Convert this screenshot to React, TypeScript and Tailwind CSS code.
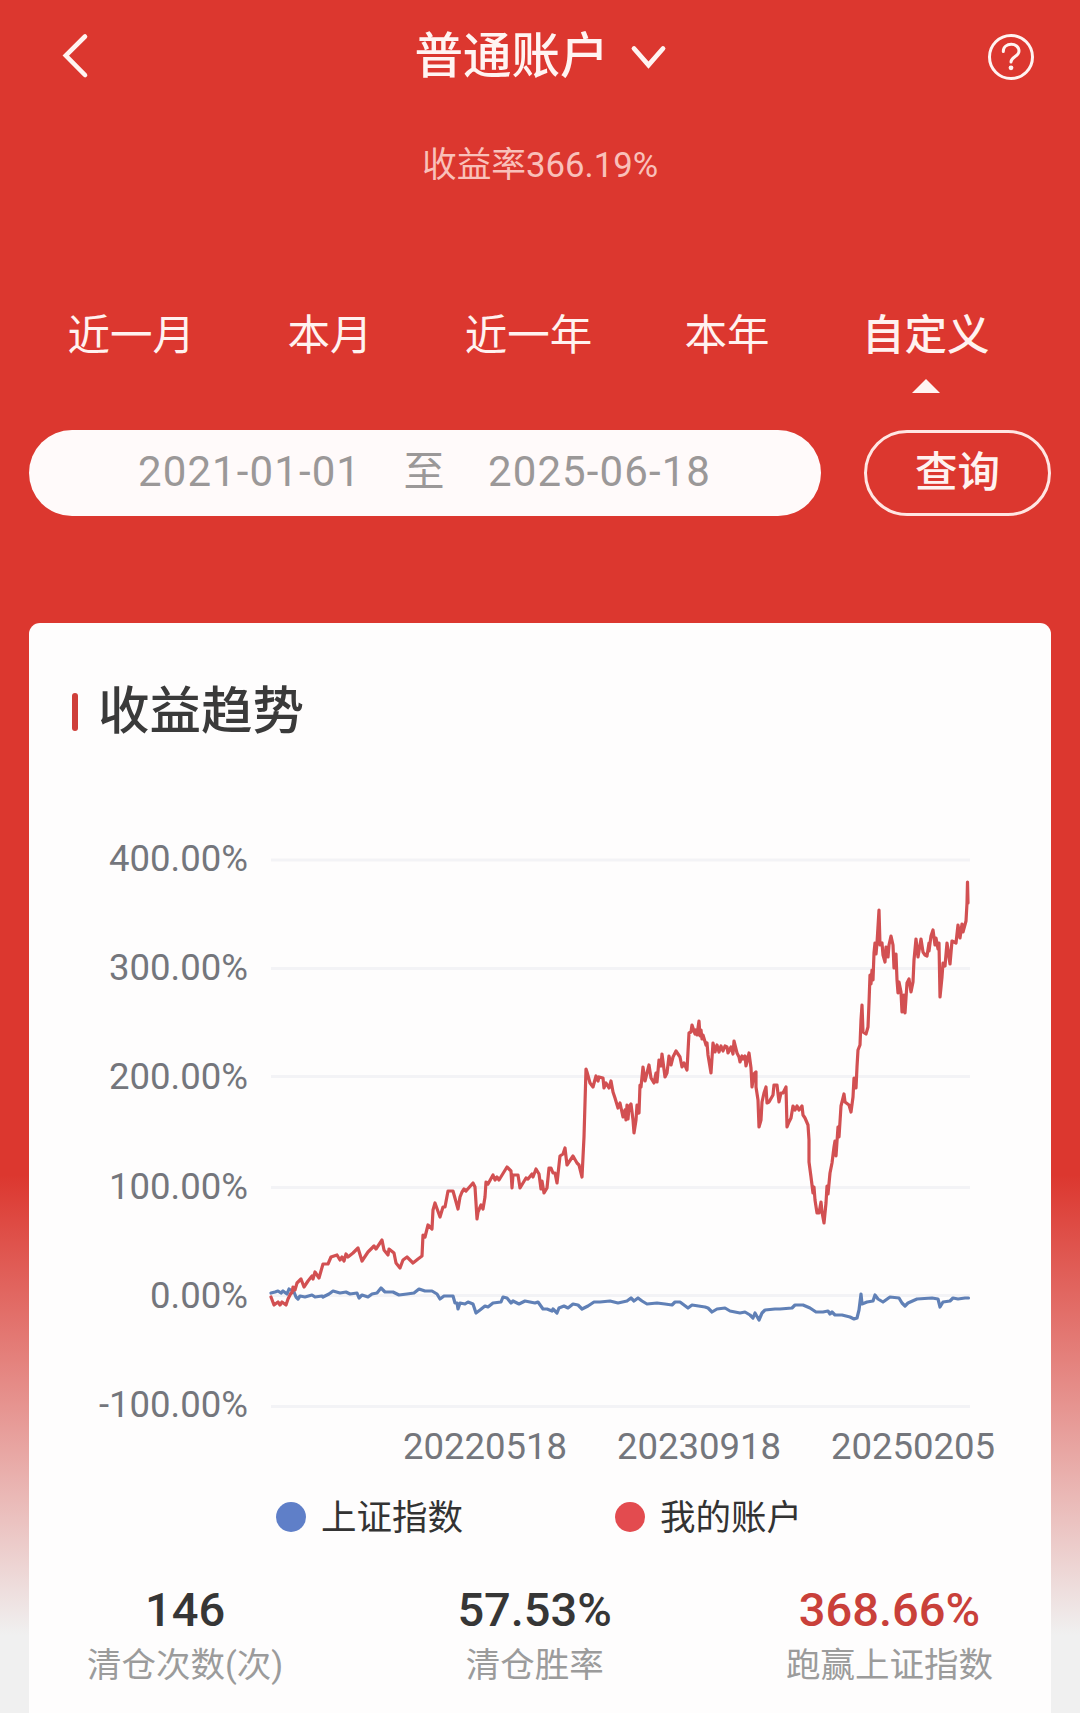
const PERIODS = ['近一月', '本月', '近一年', '本年', '自定义'];
const Y_LABELS = ['400.00%', '300.00%', '200.00%', '100.00%', '0.00%', '-100.00%'];
const X_LABELS = ['20220518', '20230918', '20250205'];
const GRID_LINES = [860, 968.5, 1076.5, 1187.5, 1295.5, 1406.5];

const ACCOUNT =
  '271,1297 274,1305 278,1302 280,1305 282,1302 286,1305 288,1299 291,1293 292,1293 293,1287 295,1290 297,1283 301,1279 304,1287 308,1281 312,1276 313,1279 315,1272 319,1278 323,1264 328,1264 331,1257 337,1255 340,1260 342,1257 344,1261 346,1254 348,1257 353,1253 358,1248 362,1261 368,1252 374,1246 376,1249 382,1240 384,1250 388,1255 389,1249 394,1253 396,1263 400,1268 403,1260 407,1257 413,1263 418,1259 422,1256 423,1235 425,1237 428,1225 432,1229 433,1210 435,1203 440,1217 443,1207 445,1207 448,1191 453,1191 458,1209 460,1197 462,1192 464,1189 466,1191 473,1183 475,1187 477,1219 ' +
  '478,1212 481,1205 483,1209 485,1197 486,1182 488,1184 493,1175 495,1180 497,1177 499,1180 507,1167 511,1171 512,1188 513,1175 518,1175 520,1188 526,1178 528,1179 532,1174 533,1177 536,1169 539,1174 541,1189 542,1181 544,1193 547,1188 549,1168 551,1168 553,1173 555,1173 557,1183 560,1156 563,1154 565,1148 567,1165 573,1156 577,1163 579,1165 582,1177 584,1137 586,1069 587,1072 590,1083 593,1087 596,1076 598,1081 599,1077 603,1078 604,1088 606,1083 609,1088 611,1081 613,1092 615,1098 618,1108 620,1103 623,1117 625,1110 626,1120 627,1105 628,1119 629,1107 631,1104 633,1120 634,1133 636,1120 637,1105 639,1113 640,1085 641,1087 643,1067 645,1081 649,1065 651,1078 654,1083 656,1073 657,1082 659,1060 661,1066 662,1054 665,1077 667,1073 669,1056 671,1065 673,1057 676,1051 680,1057 682,1067 684,1063 687,1070 ' +
  '689,1033 691,1032 692,1025 695,1034 696,1030 697,1035 699,1021 700,1036 701,1030 702,1039 703,1035 706,1045 707,1043 708,1055 711,1073 713,1043 715,1052 717,1045 719,1052 721,1046 723,1051 725,1046 727,1047 728,1053 731,1047 733,1054 734,1041 737,1053 739,1057 740,1062 742,1056 743,1059 745,1056 746,1066 749,1053 751,1068 752,1087 754,1074 756,1072 756,1087 758,1100 759,1127 761,1120 762,1102 764,1093 766,1087 767,1103 769,1102 773,1095 774,1085 777,1085 779,1102 781,1093 783,1093 786,1087 787,1127 789,1122 791,1118 793,1106 795,1110 797,1106 799,1110 802,1106 803,1115 805,1118 808,1125 809,1140 809,1162 811,1177 813,1193 814,1187 815,1200 817,1213 819,1213 821,1202 822,1212 824,1223 826,1203 827,1186 828,1194 830,1173 832,1163 834,1147 835,1141 836,1156 838,1127 839,1137 841,1106 ' +
  '844,1094 845,1102 849,1105 851,1112 853,1097 854,1078 856,1088 857,1067 858,1050 860,1045 861,1020 862,1005 863,1032 866,1034 868,1027 869,1003 870,975 871,984 872,970 873,980 874,953 875,943 876,954 877,943 879,910 880,945 882,943 883,955 885,962 886,947 888,957 889,945 891,936 893,945 894,968 896,954 897,980 898,993 899,982 901,992 902,1012 904,995 905,1013 907,983 909,979 911,992 913,982 914,960 916,939 918,957 921,939 923,952 925,955 927,956 929,943 929,951 931,936 933,930 935,945 936,938 938,949 939,943 940,997 942,977 943,963 945,966 947,943 950,964 952,941 956,943 958,925 960,938 962,924 963,932 966,921 967,903 967.5,882 968,903';

const INDEX =
  '271,1293 275,1292 278,1291 281,1293 283,1291 287,1294 289,1289 294,1292 296,1297 298,1299 300,1296 305,1297 312,1295 315,1297 322,1296 323,1297 329,1294 333,1291 340,1293 346,1292 350,1294 357,1293 359,1298 362,1295 368,1297 372,1294 377,1293 381,1288 385,1292 393,1292 399,1295 407,1294 414,1293 419,1289 425,1291 432,1291 437,1294 440,1299 444,1296 453,1296 455,1303 457,1303 458,1309 460,1303 465,1304 468,1302 473,1304 476,1313 480,1310 485,1306 488,1307 493,1303 501,1302 503,1297 ' +
  '507,1298 511,1303 513,1301 519,1304 525,1301 535,1303 538,1302 543,1309 547,1309 552,1311 553,1309 557,1313 559,1308 564,1306 568,1308 573,1304 578,1305 582,1309 588,1306 594,1302 600,1302 610,1301 618,1303 627,1301 631,1298 634,1301 638,1298 642,1301 647,1304 657,1303 665,1304 672,1305 675,1302 680,1302 688,1308 692,1305 705,1307 708,1308 712,1312 717,1309 725,1308 730,1311 740,1313 745,1312 750,1315 753,1318 755,1313 759,1320 762,1313 765,1310 775,1309 780,1309 792,1308 795,1305 803,1305 810,1308 816,1312 823,1312 828,1311 830,1314 832,1312 835,1315 842,1315 850,1317 854,1319 857,1318 859,1310 861,1294 862,1304 867,1302 873,1301 875,1295 878,1299 883,1302 890,1297 899,1298 902,1303 905,1306 908,1303 917,1299 932,1298 938,1299 940,1307 943,1302 950,1301 953,1298 958,1299 965,1298 968.5,1298';

function Header() {
  return (
    <header className="flex h-[112px] items-center justify-between pl-[60px] pr-[45px] text-[#fff4f2]">
      <svg className="h-12 w-8" viewBox="0 0 32 48" fill="none" stroke="currentColor" strokeWidth="4.600" strokeLinecap="round" strokeLinejoin="miter">
        <path d="M25 4.500 L5.800 23.500 L25 43" />
      </svg>
      <div className="ml-[4px] flex items-center gap-[20px]">
        <h1 className="mt-[2px] text-[48.5px] leading-[60px] font-medium">普通账户</h1>
        <svg className="mt-[3px] h-8 w-10" viewBox="0 0 40 32" fill="none" stroke="currentColor" strokeWidth="4.800" strokeLinecap="round" strokeLinejoin="miter">
          <path d="M5 6.500 L19.500 23 L34 6.500" />
        </svg>
      </div>
      <svg className="mt-[2px] h-12 w-12" viewBox="0 0 48 48" fill="none" stroke="currentColor" strokeWidth="3" strokeLinecap="round">
        <circle cx="24" cy="24" r="21.500" />
        <path d="M16.300 18.500 C16.300 9 32 9 32 18 C32 23.500 24 24 24 29" />
        <circle cx="24" cy="34.800" r="2.400" fill="currentColor" stroke="none" />
      </svg>
    </header>
  );
}

function Stat({ value, label, accent }: { value: string; label: string; accent?: boolean }) {
  return (
    <div className="flex flex-col items-center">
      <span className={accent ? 'text-[47px] leading-[56px] font-medium text-[#c9403a]' : 'text-[47px] leading-[56px] font-medium text-[#363636]'}>{value}</span>
      <span className="mt-[2px] text-[34.5px] leading-[50px] text-[#9b9b9b]">{label}</span>
    </div>
  );
}

export default function App() {
  return (
    <div className="h-[1713px] w-[1080px] overflow-hidden bg-[#f0f0f0] bg-[linear-gradient(to_bottom,#dc372f_0px,#dc372f_1175px,#f0f0f0_1635px)] whitespace-nowrap font-['Roboto','Noto_Sans_CJK_SC',sans-serif]">
      <Header />
      <p className="mt-[28px] text-center text-[34.7px] leading-[50px] text-[#f9c0ba]">收益率366.19%</p>

      <nav className="mt-[116px] flex pl-8 pr-[55px] text-[42.5px] leading-[60px] text-[#fff2f0]">
        {PERIODS.map((p) => (
          <div key={p} className="flex flex-1 flex-col items-center">
            <span className={p === '自定义' ? 'font-medium' : ''}>{p}</span>
            {p === '自定义' && (
              <svg className="mt-[13px] h-[14px] w-[28px]" viewBox="0 0 28 14">
                <path d="M14 0 L28 14 H0 Z" fill="#fff4f2" />
              </svg>
            )}
          </div>
        ))}
      </nav>

      <div className="mt-[37px] flex gap-[43px] px-[29px]">
        <div className="flex h-[86px] w-[792px] items-center rounded-full bg-[#fffafa] pb-[3px] pl-[109px] text-[42px] text-[#9b9898]">
          <span className="w-[222px] tracking-[1.1px]">2021-01-01</span>
          <span className="w-[128px] pt-[2px] text-center text-[41px]">至</span>
          <span className="tracking-[1.1px]">2025-06-18</span>
        </div>
        <button className="h-[86px] w-[187px] rounded-full border-3 border-[#ffe6e3] text-[42.5px] font-medium text-[#fff2f0]">查询</button>
      </div>

      <main className="mx-[29px] mt-[107px] h-[1090px] rounded-t-[11px] bg-[#fefdfd] pt-[55px]">
        <div className="flex h-[68px] items-center pl-[43px]">
          <span className="h-[38px] w-[6px] rounded-full bg-[#cf3f3a]" />
          <h2 className="ml-[20px] text-[51.5px] leading-[68px] font-medium text-[#3a3a3a]">收益趋势</h2>
        </div>

        <div className="mt-[92px] flex">
          <div className="flex h-[587px] w-[219px] flex-col justify-between pt-px text-right text-[36.5px] leading-[40px] text-[#74767c]">
            {Y_LABELS.map((l) => (
              <span key={l}>{l}</span>
            ))}
          </div>
          <svg className="ml-[21px] h-[587px] w-[704px]" viewBox="269 838 704 587" fill="none">
            {GRID_LINES.map((y) => (
              <path key={y} d={`M271 ${y} H970`} stroke="#f3f3f6" strokeWidth="3" />
            ))}
            <polyline points={INDEX} stroke="#6080b6" strokeWidth="3.200" strokeLinejoin="round" strokeLinecap="round" />
            <polyline points={ACCOUNT} stroke="#d25052" strokeWidth="3.200" strokeLinejoin="round" strokeLinecap="round" />
          </svg>
        </div>

        <div className="flex gap-[50px] pl-[374px] pt-px text-[36.5px] leading-[42px] text-[#74767c]">
          {X_LABELS.map((l) => (
            <span key={l} className="w-[164px]">{l}</span>
          ))}
        </div>

        <div className="mt-[24px] flex pl-[247px] text-[35.5px] leading-[50px] text-[#333]">
          <div className="flex w-[339px] items-center gap-[15px]">
            <span className="size-[30px] rounded-full bg-[#5f7fc8]" />
            <span className="pt-[2px] leading-[48px]">上证指数</span>
          </div>
          <div className="flex items-center gap-[15px]">
            <span className="size-[30px] rounded-full bg-[#e34b4f]" />
            <span className="pt-[2px] leading-[48px]">我的账户</span>
          </div>
        </div>

        <div className="mt-[40px] flex justify-between pl-[58px] pr-[58px]">
          <Stat value="146" label="清仓次数(次)" />
          <Stat value="57.53%" label="清仓胜率" />
          <Stat value="368.66%" label="跑赢上证指数" accent />
        </div>
      </main>
    </div>
  );
}
